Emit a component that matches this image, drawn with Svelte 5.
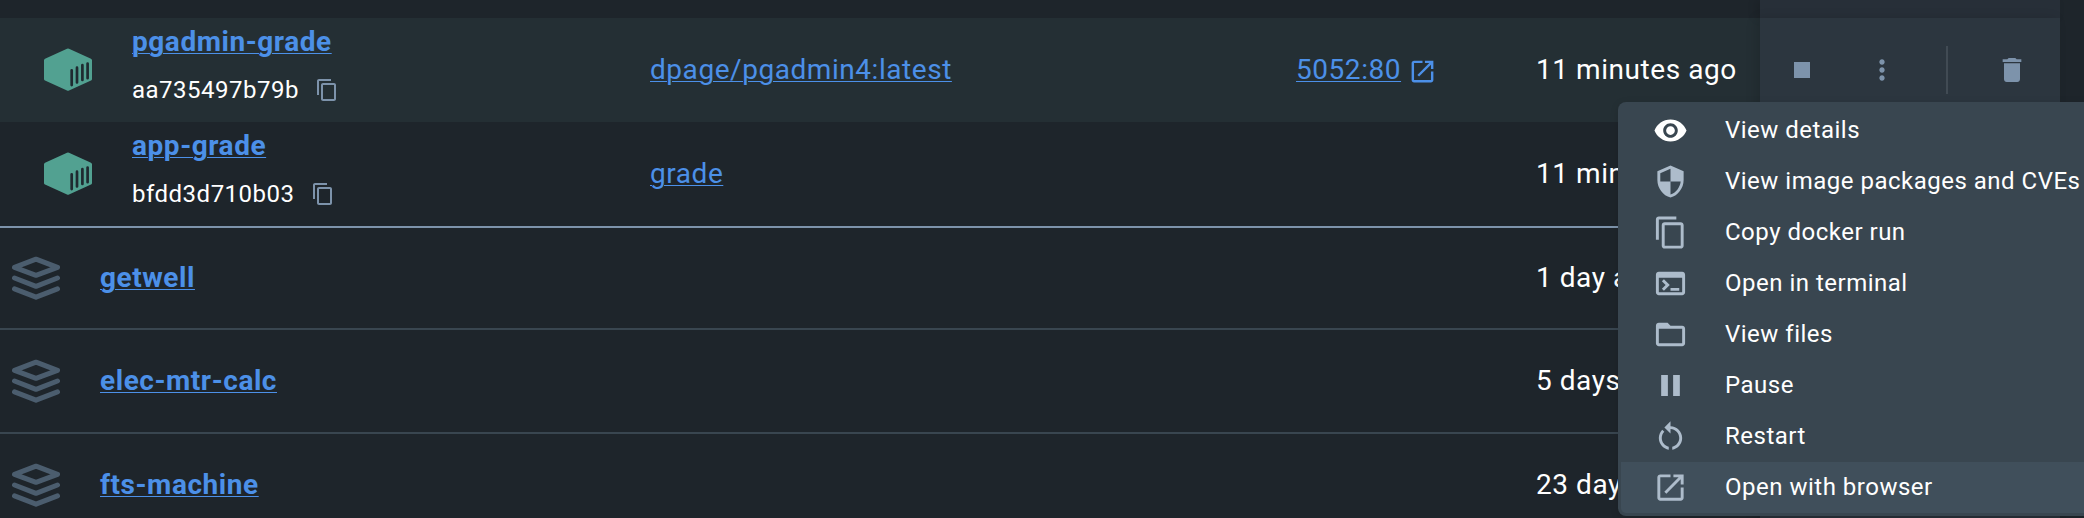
<script>
  const rows = [
    { kind: 'container', name: 'pgadmin-grade', id: 'aa735497b79b', image: 'dpage/pgadmin4:latest', port: '5052:80', started: '11 minutes ago', actions: true },
    { kind: 'container', name: 'app-grade', id: 'bfdd3d710b03', image: 'grade', started: '11 minutes ago' },
    { kind: 'stack', name: 'getwell', started: '1 day ago' },
    { kind: 'stack', name: 'elec-mtr-calc', started: '5 days ago' },
    { kind: 'stack', name: 'fts-machine', started: '23 days ago' }
  ];

  const copyPath = 'M16 1H4c-1.1 0-2 .9-2 2v14h2V3h12V1zm3 4H8c-1.1 0-2 .9-2 2v14c0 1.1.9 2 2 2h11c1.1 0 2-.9 2-2V7c0-1.1-.9-2-2-2zm0 16H8V7h11v14z';
  const launchPath = 'M19 19H5V5h7V3H5c-1.11 0-2 .9-2 2v14c0 1.1.89 2 2 2h14c1.1 0 2-.9 2-2v-7h-2v7zM14 3v2h3.59l-9.83 9.83 1.41 1.41L19 6.41V10h2V3h-7z';

  const menu = [
    { label: 'View details', bright: true, path: 'M12 4.5C7 4.5 2.73 7.61 1 12c1.73 4.39 6 7.5 11 7.5s9.27-3.11 11-7.5c-1.73-4.39-6-7.5-11-7.5zM12 17c-2.76 0-5-2.24-5-5s2.24-5 5-5 5 2.24 5 5-2.24 5-5 5zm0-8c-1.66 0-3 1.34-3 3s1.34 3 3 3 3-1.34 3-3-1.34-3-3-3z' },
    { label: 'View image packages and CVEs', path: 'M12 1 3 5v6c0 5.55 3.84 10.74 9 12 5.16-1.26 9-6.45 9-12V5l-9-4zm0 10.99h7c-.53 4.12-3.28 7.79-7 8.94V12H5V6.3l7-3.11v8.8z' },
    { label: 'Copy docker run', path: copyPath },
    { label: 'Open in terminal', path: 'M20 4H4c-1.11 0-2 .9-2 2v12c0 1.1.89 2 2 2h16c1.1 0 2-.9 2-2V6c0-1.1-.89-2-2-2zm0 14H4V8h16v10zm-2-1h-6v-2h6v2zM7.5 17l-1.41-1.41L8.67 13l-2.59-2.59L7.5 9l4 4-4 4z' },
    { label: 'View files', path: 'M20 6h-8l-2-2H4c-1.1 0-1.99.9-1.99 2L2 18c0 1.1.9 2 2 2h16c1.1 0 2-.9 2-2V8c0-1.1-.9-2-2-2zm0 12H4V8h16v10z' },
    { label: 'Pause', path: 'M5.6 4.8h4.6v14.4H5.6zM13.8 4.8h4.6v14.4h-4.6z' },
    { label: 'Restart', path: 'M12 5V1.6L7.8 5.8 12 10V6.9c3.3.2 6 2.8 6 6.1 0 2.9-2 5.3-4.8 5.95V21c3.9-.6 6.8-3.9 6.8-8 0-4.4-3.6-8-8-8zM6 13c0-1.65.67-3.15 1.76-4.24L6.34 7.34C4.9 8.79 4 10.79 4 13c0 4.08 2.95 7.44 6.8 8v-2.05C8.1 18.4 6 15.9 6 13z' },
    { label: 'Open with browser', path: launchPath, active: true }
  ];
</script>

{#snippet icon(path, size)}
  <svg width={size} height={size} viewBox="0 0 24 24" fill="currentColor"><path d={path} /></svg>
{/snippet}

<main>
  <section class="table">
    <div class="row tail"><div class="cells"></div><div class="actions"></div></div>
    {#each rows as row, i}
      <div class="row {row.kind}" class:hovered={i === 0} class:last={i === 1} class:first={i === 2}>
        <div class="cells">
          <div class="glyph">
            {#if row.kind === 'container'}
              <svg width="48" height="44" viewBox="0 0 48 44">
                <path fill="#52a191" d="M23 .8q1-.5 2 0L47 10.700q1 .5 1 1.500v18.700q0 1-1 1.500L25 42.600q-1 .5-2 0L1 32.400q-1-.5-1-1.500V12.200q0-1 1-1.500z" />
                <path class="slats" d="M27.700 22.300v14.800M33 19.700v14.800M38.400 17.200v14.800M43.600 15.500v14.700" />
              </svg>
            {:else}
              <svg class="layers" width="48" height="44" viewBox="0 0 48 44">
                <path d="M24 3.200 45.500 11.300 24 19.300 2.500 11.300z" />
                <path d="M2.500 22 24 30.300 45.500 22" />
                <path d="M2.500 32.900 24 41.200 45.500 32.900" />
              </svg>
            {/if}
          </div>
          <div class="title">
            <a class="name" href="#top">{row.name}</a>
            {#if row.id}
              <div class="id"><span>{row.id}</span>{@render icon(copyPath, 24)}</div>
            {/if}
          </div>
          <div class="image">{#if row.image}<a href="#top">{row.image}</a>{/if}</div>
          <div class="port">{#if row.port}<a href="#top">{row.port}</a>{@render icon(launchPath, 29)}{/if}</div>
          <div class="started">{row.started}</div>
        </div>
        <div class="actions">
          {#if row.actions}
            <span class="stop">{@render icon('M6 6h12v12H6z', 32)}</span>
            <span class="more">{@render icon('M12 8c1.100 0 2-.9 2-2s-.9-2-2-2-2 .9-2 2 .9 2 2 2zm0 2c-1.100 0-2 .9-2 2s.9 2 2 2 2-.9 2-2-.9-2-2-2zm0 6c-1.100 0-2 .9-2 2s.9 2 2 2 2-.9 2-2-.9-2-2-2z', 32)}</span>
            <span class="divider"></span>
            <span class="trash">{@render icon('M6 19c0 1.100.9 2 2 2h8c1.100 0 2-.9 2-2V7H6v12zM19 4h-3.500l-1-1h-5l-1 1H5v2h14V4z', 32)}</span>
          {/if}
        </div>
      </div>
    {/each}
  </section>

  <ul class="menu">
    {#each menu as item}
      <li class:bright={item.bright} class:active={item.active}>
        {@render icon(item.path, 35)}
        <span>{item.label}</span>
      </li>
    {/each}
  </ul>
</main>

<style>
  :global(body) { background: #1e252b; }
  main {
    position: relative;
    height: 518px;
    overflow: hidden;
    background: #1e252b;
    color: #fff;
    font-family: Roboto, sans-serif;
    font-size: 28px;
    letter-spacing: 0.55px;
  }
  svg { display: block; flex: none; }
  a {
    color: #4c90e8;
    text-decoration: underline;
    text-decoration-thickness: 1px;
    text-underline-offset: 2px;
  }
  .table { width: 2060px; }
  .row {
    display: grid;
    grid-template-columns: 1760px 300px;
    box-sizing: border-box;
    height: 104px;
  }
  .tail { height: 18px; }
  .stack { border-bottom: 2px solid #394650; }
  .first { height: 102px; }
  .last { height: 106px; border-bottom: 2px solid #7d93ab; }
  .hovered { background: #242f34; }
  .cells {
    display: grid;
    grid-template-columns: 132px 518px 646px 240px 1fr;
    align-items: center;
  }
  .tail .cells, .tail .actions { height: 18px; }
  .stack .cells { grid-template-columns: 100px 550px 646px 240px 1fr; }
  .glyph { padding-left: 44px; }
  .stack .glyph { padding-left: 12px; }
  .slats { stroke: #1f2a30; stroke-width: 2.7; stroke-linecap: round; fill: none; }
  .layers path { fill: none; stroke: #4b5d6e; stroke-width: 5; stroke-linecap: round; stroke-linejoin: round; }
  .title { display: flex; flex-direction: column; align-items: flex-start; gap: 16px; }
  .container .title { padding-bottom: 10px; }
  .name { font-weight: 700; line-height: 34px; }
  .id { display: flex; align-items: center; gap: 16px; font-size: 24px; letter-spacing: 0.5px; line-height: 30px; }
  .id svg { color: #7d93ab; }
  .image, .started { padding-bottom: 2px; }
  .port { display: flex; align-items: center; gap: 7px; color: #4c90e8; }
  .port a { padding-bottom: 2px; }
  .port svg { margin-top: 2px; }
  .started { white-space: nowrap; }
  .actions {
    display: flex;
    align-items: center;
    background: #272f38;
    box-shadow: -4px 0 10px rgba(0, 0, 0, 0.12);
    color: #7d93ab;
  }
  .hovered .actions { background: #2c363f; }
  .stop { margin-left: 26px; }
  .more { margin-left: 48px; }
  .divider { width: 2px; height: 48px; margin-left: 48px; background: #414b54; }
  .trash { margin-left: 48px; }
  .menu {
    position: absolute;
    left: 1618px;
    top: 102px;
    width: 500px;
    box-sizing: border-box;
    margin: 0;
    padding: 3px;
    list-style: none;
    border-radius: 8px;
    background: #394650;
    box-shadow: 0 2px 8px rgba(0, 0, 0, 0.12);
    font-size: 24px;
    letter-spacing: 0.5px;
  }
  .menu li {
    display: flex;
    align-items: center;
    gap: 37px;
    height: 51px;
    padding-left: 32px;
    white-space: nowrap;
  }
  .menu li span { padding-bottom: 2px; }
  .menu li svg { color: #adbccb; }
  .menu li.bright svg { color: #fff; }
  .menu li.active { background: #404f5b; border-radius: 0 0 5px 5px; }
</style>
